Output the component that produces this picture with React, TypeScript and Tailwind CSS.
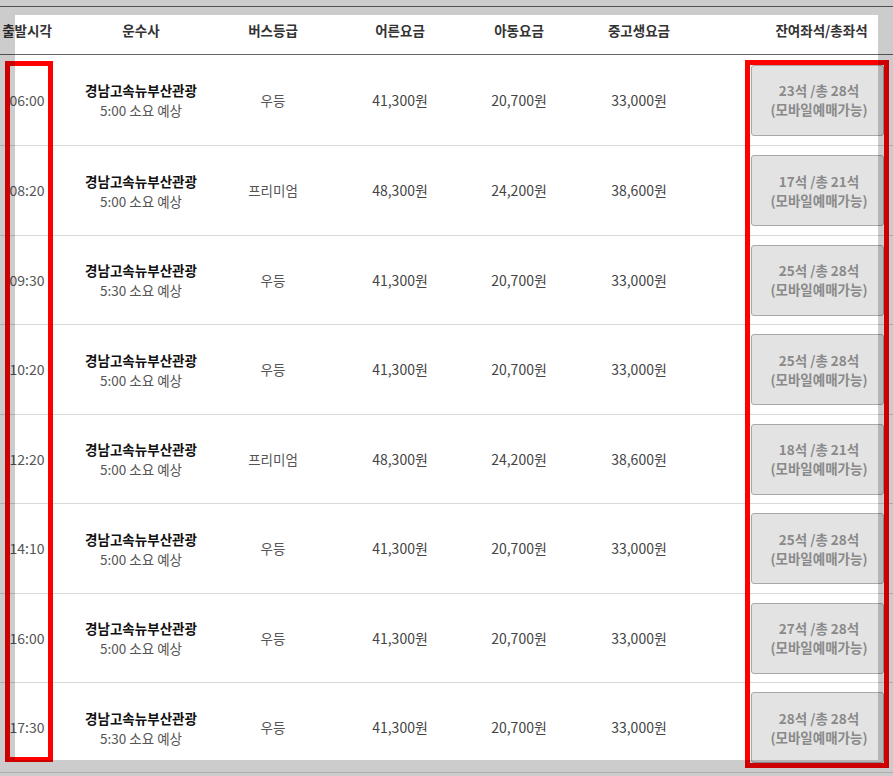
import React from "react";

type Row = {
  time: string;
  dur: string;
  grade: string;
  adult: string;
  child: string;
  teen: string;
  seats: string;
  h: string;
};

const rows: Row[] = [
  { time: "06:00", dur: "5:00 소요 예상", grade: "우등", adult: "41,300원", child: "20,700원", teen: "33,000원", seats: "23석 /총 28석", h: "h-[91px]" },
  { time: "08:20", dur: "5:00 소요 예상", grade: "프리미엄", adult: "48,300원", child: "24,200원", teen: "38,600원", seats: "17석 /총 21석", h: "h-[90px]" },
  { time: "09:30", dur: "5:30 소요 예상", grade: "우등", adult: "41,300원", child: "20,700원", teen: "33,000원", seats: "25석 /총 28석", h: "h-[89px]" },
  { time: "10:20", dur: "5:00 소요 예상", grade: "우등", adult: "41,300원", child: "20,700원", teen: "33,000원", seats: "25석 /총 28석", h: "h-[90px]" },
  { time: "12:20", dur: "5:00 소요 예상", grade: "프리미엄", adult: "48,300원", child: "24,200원", teen: "38,600원", seats: "18석 /총 21석", h: "h-[89px]" },
  { time: "14:10", dur: "5:00 소요 예상", grade: "우등", adult: "41,300원", child: "20,700원", teen: "33,000원", seats: "25석 /총 28석", h: "h-[90px]" },
  { time: "16:00", dur: "5:00 소요 예상", grade: "우등", adult: "41,300원", child: "20,700원", teen: "33,000원", seats: "27석 /총 28석", h: "h-[89px]" },
  { time: "17:30", dur: "5:30 소요 예상", grade: "우등", adult: "41,300원", child: "20,700원", teen: "33,000원", seats: "28석 /총 28석", h: "h-[90px]" },
];

export default function App() {
  return (
    <div
      className="relative w-[893px] h-[776px] overflow-hidden bg-white"
      style={{ fontFamily: '"Noto Sans CJK KR", "Noto Sans", sans-serif' }}
    >
      <div className="pt-[6px]">
        <div className="border-t border-[#666]">
          {/* header */}
          <div className="flex h-[48px] items-center border-b border-[#666] text-[13.5px] font-bold text-[#333]">
            <div className="w-[54px] text-center">출발시각</div>
            <div className="w-[174px] text-center">운수사</div>
            <div className="w-[90px] text-center">버스등급</div>
            <div className="w-[164px] text-center">어른요금</div>
            <div className="w-[74px] text-center">아동요금</div>
            <div className="w-[166px] text-center">중고생요금</div>
            <div className="flex-1 pl-[33px]">
              <div className="w-[133px] text-center">잔여좌석/총좌석</div>
            </div>
          </div>
          {rows.map((r, i) => (
            <div
              key={i}
              className={`flex items-center border-b border-[#d9d9d9] text-[14px] text-[#555] ${r.h}`}
            >
              <div className="w-[54px] text-center">{r.time}</div>
              <div className="w-[174px] text-center leading-[20px]">
                <div className="text-[13.5px] font-bold text-[#111]">경남고속뉴부산관광</div>
                <div className="text-[13.5px] text-[#555]">{r.dur}</div>
              </div>
              <div className="w-[90px] text-center text-[13.5px]">{r.grade}</div>
              <div className="w-[164px] text-center text-[#444]">{r.adult}</div>
              <div className="w-[74px] text-center text-[#444]">{r.child}</div>
              <div className="w-[166px] text-center text-[#444]">{r.teen}</div>
              <div className="flex-1 pl-[29px]">
                <div className="flex h-[71px] w-[133px] flex-col items-center justify-center rounded-[3px] border border-[#a8a8a8] bg-[#e3e3e3] pl-[3px] text-[13.5px] font-bold leading-[19px] text-[#8a8a8a]">
                  <div>{r.seats}</div>
                  <div>(모바일예매가능)</div>
                </div>
              </div>
            </div>
          ))}
        </div>
      </div>

      {/* red annotation boxes */}
      <div className="absolute left-[5px] top-[61px] h-[701px] w-[48px] border-[5px] border-[#ff0000]" />
      <div className="absolute left-[745px] top-[60px] h-[708px] w-[144px] border-[5px] border-[#ff0000]" />

      {/* dim overlay with highlight cutout */}
      <div className="pointer-events-none absolute left-[15px] top-[15px] h-[745px] w-[863px] shadow-[0_0_0_2000px_rgba(0,0,0,0.2)]" />
    </div>
  );
}
